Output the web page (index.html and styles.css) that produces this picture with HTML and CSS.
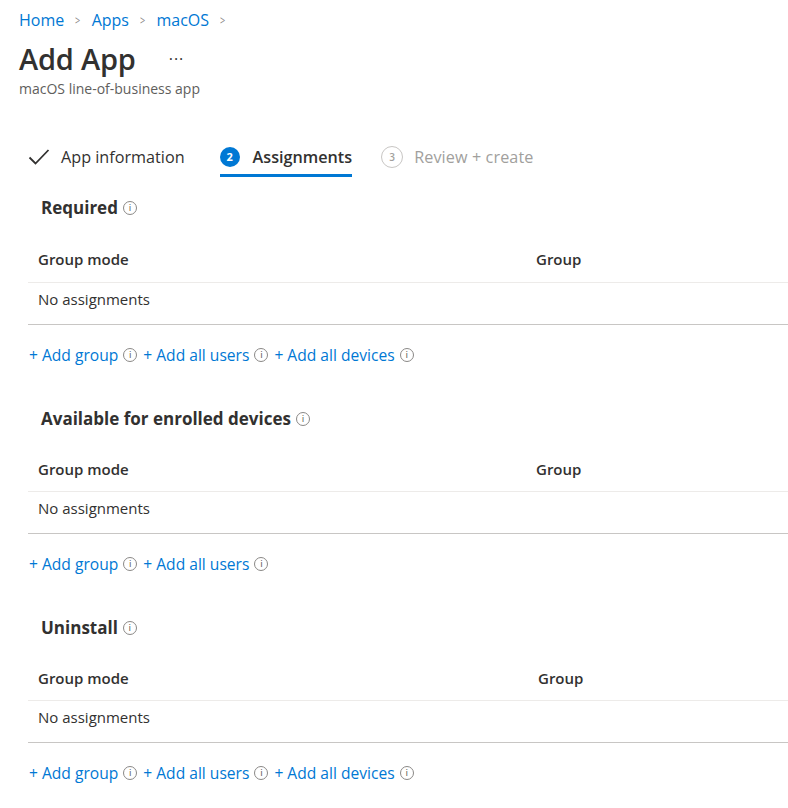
FILE: index.html
```html
<!DOCTYPE html>
<html lang="en">
<head>
<meta charset="utf-8">
<title>Add App</title>
<link rel="stylesheet" href="styles.css">
</head>
<body>
<div class="page">
  <nav class="crumbs">
    <a class="crumb">Home</a><span class="sep">&gt;</span>
    <a class="crumb">Apps</a><span class="sep">&gt;</span>
    <a class="crumb">macOS</a><span class="sep">&gt;</span>
  </nav>
  <div class="title-row">
    <h1 class="title">Add App</h1>
    <span class="more">&middot;&middot;&middot;</span>
  </div>
  <div class="subtitle">macOS line-of-business app</div>

  <div class="tabs">
    <div class="tab done">
      <svg class="check" width="22" height="18" viewBox="0 0 22 18"><path d="M1.5 9.5 L7.5 15.5 L20.5 2" fill="none" stroke="#323130" stroke-width="1.8"/></svg>
      <span>App information</span>
    </div>
    <div class="tab active">
      <span class="num filled">2</span>
      <span>Assignments</span>
    </div>
    <div class="tab todo">
      <span class="num outline">3</span>
      <span>Review + create</span>
    </div>
  </div>

  <section class="block first">
    <h2 class="heading">Required <span class="info">i</span></h2>
    <div class="table">
      <div class="row head"><span class="c1">Group mode</span><span class="c2">Group</span></div>
      <div class="row body"><span class="c1">No assignments</span></div>
    </div>
    <div class="links">
      <a>+ Add group</a><span class="info">i</span>
      <a>+ Add all users</a><span class="info">i</span>
      <a>+ Add all devices</a><span class="info">i</span>
    </div>
  </section>

  <section class="block">
    <h2 class="heading">Available for enrolled devices <span class="info">i</span></h2>
    <div class="table">
      <div class="row head"><span class="c1">Group mode</span><span class="c2">Group</span></div>
      <div class="row body"><span class="c1">No assignments</span></div>
    </div>
    <div class="links">
      <a>+ Add group</a><span class="info">i</span>
      <a>+ Add all users</a><span class="info">i</span>
    </div>
  </section>

  <section class="block">
    <h2 class="heading">Uninstall <span class="info">i</span></h2>
    <div class="table">
      <div class="row head"><span class="c1">Group mode</span><span class="c2 wide">Group</span></div>
      <div class="row body"><span class="c1">No assignments</span></div>
    </div>
    <div class="links">
      <a>+ Add group</a><span class="info">i</span>
      <a>+ Add all users</a><span class="info">i</span>
      <a>+ Add all devices</a><span class="info">i</span>
    </div>
  </section>
</div>
</body>
</html>
```

FILE: styles.css
```css
* { box-sizing: border-box; }
html, body { margin: 0; padding: 0; background: #fff; }
body {
  font-family: "Open Sans", "Noto Sans", sans-serif;
  color: #323130;
  width: 788px;
  overflow: hidden;
}
.page { padding: 10px 0 0 0; }

.crumbs {
  display: flex;
  align-items: center;
  height: 20px;
  padding-left: 19px;
  font-size: 16px;
  line-height: 20px;
}
.crumb { color: #0078d4; }
.sep {
  color: #8a8886;
  font-size: 13px;
  margin: 0 10px;
  transform: scaleX(0.7);
}

.title-row {
  display: flex;
  align-items: center;
  height: 40px;
  margin-top: 9px;
  padding-left: 19px;
}
.title {
  margin: 0;
  font-size: 29px;
  font-weight: 600;
  line-height: 40px;
  letter-spacing: -0.2px;
}
.more {
  margin-left: 33px;
  font-size: 16px;
  color: #323130;
  letter-spacing: 1px;
}
.subtitle {
  padding-left: 19px;
  font-size: 14px;
  line-height: 20px;
  height: 20px;
  color: #605e5c;
}

.tabs {
  display: flex;
  margin-top: 40px;
  padding-left: 28px;
  height: 40px;
}
.tab {
  display: flex;
  align-items: center;
  gap: 12px;
  height: 37px;
  font-size: 16.2px;
  padding-bottom: 2px;
}
.tab.done { gap: 11px; margin-right: 35px; }
.tab.active {
  font-weight: 600;
  gap: 13px;
  border-bottom: 3px solid #0078d4;
  padding-bottom: 0;
  height: 38px;
  margin-right: 29px;
}
.tab.todo { color: #a19f9d; gap: 11px; letter-spacing: 0.1px; }
.check { display: block; }
.num {
  display: inline-flex;
  align-items: center;
  justify-content: center;
  border-radius: 50%;
  font-size: 11px;
  font-weight: 700;
  letter-spacing: 0;
}
.num.filled {
  width: 20px;
  height: 20px;
  background: #0078d4;
  color: #fff;
}
.num.outline {
  width: 22px;
  height: 22px;
  border: 1px solid #c8c6c4;
  color: #a19f9d;
  font-weight: 600;
  font-size: 10px;
}

.block { padding-top: 37px; }
.block.first { padding-top: 12px; }
.heading {
  margin: 0;
  padding-left: 41px;
  padding-top: 4px;
  height: 30px;
  line-height: 26px;
  font-size: 17px;
  font-weight: 700;
  display: flex;
  align-items: center;
  gap: 5px;
}
.info {
  display: inline-flex;
  align-items: center;
  justify-content: center;
  width: 14px;
  height: 14px;
  border: 1px solid #8a8886;
  border-radius: 50%;
  font-size: 9px;
  font-weight: 400;
  line-height: 1;
  color: #605e5c;
  font-family: "DejaVu Sans", sans-serif;
  flex: none;
  letter-spacing: 0;
}

.table { margin: 15px 0 0 28px; }
.block.first .table { margin-top: 16px; }
.row {
  display: flex;
  font-size: 15px;
  line-height: 20px;
}
.row.head {
  height: 45px;
  align-items: center;
  border-bottom: 1px solid #edebe9;
  font-weight: 600;
  color: #323130;
}
.block.first .row.head { height: 46px; padding-bottom: 1px; }
.row.body {
  height: 42px;
  padding-top: 6px;
  border-bottom: 1px solid #c8c6c4;
}
.c1 { padding-left: 10px; width: 508px; }
.c2.wide { padding-left: 2px; }

.links {
  display: flex;
  align-items: center;
  gap: 5px;
  margin-top: 20px;
  padding-left: 29px;
  height: 20px;
  font-size: 15.6px;
}
.links a { color: #0078d4; }
.links .info { margin-right: 1px; }
```
